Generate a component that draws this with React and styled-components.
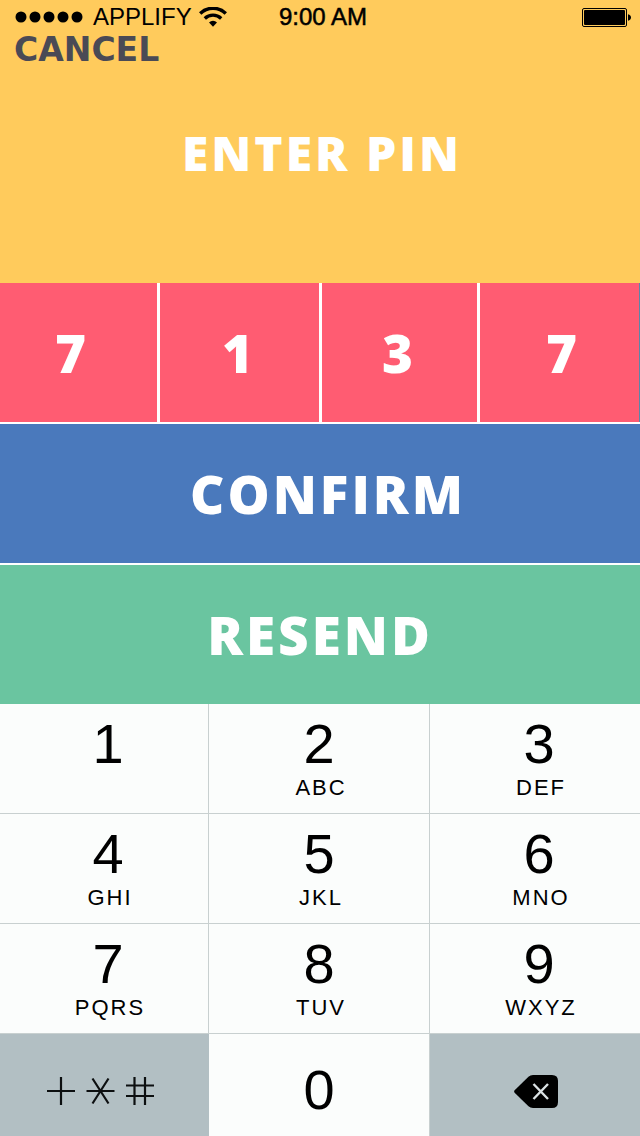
import React, { useState } from "react";
import styled, { createGlobalStyle } from "styled-components";

const GlobalStyle = createGlobalStyle`
  *, *::before, *::after { box-sizing: border-box; }
  body { margin: 0; background: #fff; }
  button, input { font: inherit; color: inherit; border: 0; border-radius: 0; padding: 0; margin: 0; }
  button { cursor: pointer; }
`;

const display = `"Open Sans", "Noto Sans", sans-serif`;
const system = `"Liberation Sans", Arial, sans-serif`;

const Screen = styled.main`
  display: flex;
  flex-direction: column;
  min-height: 100vh;
  font-family: ${display};
`;

const Header = styled.header`
  display: flex;
  flex-direction: column;
  height: 283px;
  background: #ffcb5c;
`;

const StatusBar = styled.div`
  display: grid;
  grid-template-columns: 1fr auto 1fr;
  align-items: center;
  height: 34px;
  padding: 0 9px 0 15px;
  font-family: ${system};
  font-size: 24px;
  line-height: 34px;
  color: #000;
`;

const Carrier = styled.div`
  display: flex;
  align-items: center;
  gap: 10px;
`;

const CarrierName = styled.span`
  margin-right: -3px;
`;

const Clock = styled.time`
  -webkit-text-stroke: 0.5px #000;
`;

const Battery = styled.svg`
  justify-self: end;
`;

const Cancel = styled.button`
  align-self: flex-start;
  margin-left: 14px;
  background: none;
  color: #4a4a55;
  font-family: "DejaVu Sans", sans-serif;
  font-size: 33px;
  font-weight: 700;
  line-height: 32px;
`;

const Title = styled.h1`
  margin: 55px 0 0;
  padding-left: 4px;
  text-align: center;
  color: #fff;
  font-size: 48px;
  font-weight: 800;
  line-height: 64px;
  letter-spacing: 3px;
`;

const PinRow = styled.div`
  display: grid;
  grid-template-columns: 157fr 159fr 155fr 160fr;
  gap: 3px;
  height: 139px;
`;

const PinDigit = styled.input`
  width: 100%;
  min-width: 0;
  height: 100%;
  padding-right: 4px;
  background: #ff5c72;
  color: #fff;
  text-align: center;
  font-size: 53px;
  font-weight: 800;

  &:first-child { padding-right: 16px; }
  &:last-child {
    padding: 0 0 0 4px;
    border-right: 1px solid #5b86a8;
  }
`;

const Action = styled.button`
  height: 139px;
  margin-top: 2px;
  padding-left: ${(p) => p.$inset || 0}px;
  background: ${(p) => p.$color};
  color: #fff;
  font-size: 53px;
  font-weight: 800;
  letter-spacing: 3px;
`;

const Keypad = styled.div`
  display: grid;
  flex: 1;
  grid-template-columns: 209fr 221fr 210fr;
  grid-template-rows: repeat(3, 110px) minmax(102px, 1fr);
  font-family: ${system};
  color: #000;
`;

const Key = styled.button`
  display: flex;
  flex-direction: column;
  align-items: center;
  padding: ${(p) => (p.$tall ? 28 : 12)}px 0 0 ${(p) => (p.$outer ? 8 : 0)}px;
  background: ${(p) => (p.$muted ? "#b2bfc3" : "#fbfdfc")};
  border-right: ${(p) => (p.$last || p.$muted ? 0 : 1)}px solid #c8d0d0;
  border-bottom: ${(p) => (p.$tall || p.$muted ? 0 : 1)}px solid #c8d0d0;
`;

const SymbolKey = styled(Key)`
  padding: 12px ${(p) => (p.$last ? 0 : 8)}px 0 ${(p) => (p.$last ? 2 : 0)}px;
  justify-content: center;
`;

const KeyDigit = styled.span`
  font-size: 56px;
  line-height: 56px;
`;

const KeyLetters = styled.span`
  margin-top: 4px;
  padding-left: 4px;
  font-size: 22px;
  line-height: 24px;
  letter-spacing: 2px;
`;

const KEYS = [
  ["1", ""], ["2", "ABC"], ["3", "DEF"],
  ["4", "GHI"], ["5", "JKL"], ["6", "MNO"],
  ["7", "PQRS"], ["8", "TUV"], ["9", "WXYZ"],
];

function SignalDots() {
  return (
    <svg width="68" height="12" viewBox="0 0 68 12" aria-hidden="true">
      {[6, 20, 34, 48, 62].map((x) => (
        <circle key={x} cx={x} cy="6" r="5.5" />
      ))}
    </svg>
  );
}

function WifiIcon() {
  return (
    <svg width="28" height="20" viewBox="0 0 28 20" aria-hidden="true">
      <g fill="none" stroke="#000" strokeWidth="3.4">
        <path d="M1.200 6.400A18.500 18.500 0 0 1 26.800 6.400" />
        <path d="M5.800 11.400A12 12 0 0 1 22.200 11.400" />
      </g>
      <path d="M14 19.800L10 15.400A6 6 0 0 1 18 15.400Z" />
    </svg>
  );
}

function BatteryIcon() {
  return (
    <Battery width="49" height="19" viewBox="0 0 49 19" aria-hidden="true">
      <rect x="0.5" y="0.5" width="44" height="18" rx="1.5" fill="none" stroke="#000" />
      <rect x="2" y="2" width="41" height="15" rx="1" />
      <path d="M46 6.2C48 6.8 49 8 49 9.5S48 12.2 46 12.8Z" />
    </Battery>
  );
}

function SymbolsIcon() {
  return (
    <svg width="110" height="30" viewBox="0 0 110 30" fill="none" stroke="#0c0f10" strokeWidth="2.2" aria-hidden="true">
      <path d="M1 15H29M15 1V29" />
      <path d="M40.500 15H68.500M46.500 2.500L62.500 27.500M62.500 2.500L46.500 27.500" />
      <path d="M80 9.500H108M80 20H108M88.500 1V29M99 1V29" />
    </svg>
  );
}

function BackspaceIcon() {
  return (
    <svg width="44" height="33" viewBox="0 0 44 33" aria-hidden="true">
      <path d="M0.600 15.300L14.500 1.700Q16.300 0 19 0H38Q44 0 44 6V27Q44 33 38 33H19Q16.300 33 14.500 31.300L0.600 17.700Q-0.400 16.500 0.600 15.300Z" />
      <path d="M19.500 9L34 24M34 9L19.500 24" stroke="#dbe2e4" strokeWidth="2.400" />
    </svg>
  );
}

export default function App() {
  const [pin, setPin] = useState(["7", "1", "3", "7"]);
  const write = (index, value) => setPin(pin.map((d, i) => (i === index ? value : d)));
  const press = (digit) => {
    const free = pin.indexOf("");
    if (free >= 0) write(free, digit);
  };
  const erase = () => {
    const filled = pin.filter(Boolean).length;
    if (filled > 0) write(filled - 1, "");
  };

  return (
    <Screen>
      <GlobalStyle />
      <Header>
        <StatusBar>
          <Carrier>
            <SignalDots />
            <CarrierName>APPLIFY</CarrierName>
            <WifiIcon />
          </Carrier>
          <Clock>9:00 AM</Clock>
          <BatteryIcon />
        </StatusBar>
        <Cancel type="button">CANCEL</Cancel>
        <Title>ENTER PIN</Title>
      </Header>
      <PinRow>
        {pin.map((digit, i) => (
          <PinDigit
            key={i}
            type="text"
            inputMode="numeric"
            maxLength={1}
            aria-label={`PIN digit ${i + 1}`}
            value={digit}
            onChange={(e) => write(i, e.target.value)}
          />
        ))}
      </PinRow>
      <Action type="button" $color="#4a79bc" $inset={16}>CONFIRM</Action>
      <Action type="button" $color="#6ac5a0">RESEND</Action>
      <Keypad>
        {KEYS.map(([digit, letters], i) => (
          <Key key={digit} type="button" $outer={i % 3 !== 1} $last={i % 3 === 2} onClick={() => press(digit)}>
            <KeyDigit>{digit}</KeyDigit>
            {letters && <KeyLetters>{letters}</KeyLetters>}
          </Key>
        ))}
        <SymbolKey type="button" $muted aria-label="Symbols">
          <SymbolsIcon />
        </SymbolKey>
        <Key type="button" $tall onClick={() => press("0")}>
          <KeyDigit>0</KeyDigit>
        </Key>
        <SymbolKey type="button" $muted $last aria-label="Delete" onClick={erase}>
          <BackspaceIcon />
        </SymbolKey>
      </Keypad>
    </Screen>
  );
}
